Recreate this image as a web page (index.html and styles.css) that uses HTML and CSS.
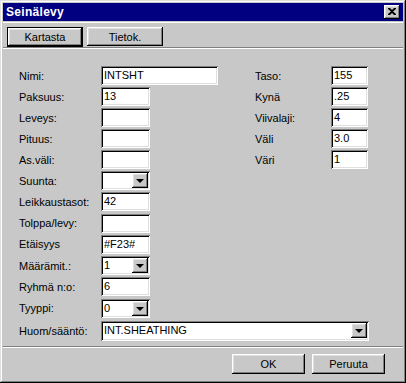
FILE: index.html
```html
<!DOCTYPE html>
<html lang="fi">
<head>
    <meta charset="UTF-8">
    <title>Seinälevy</title>
    <link rel="stylesheet" href="styles.css">
</head>
<body>
    <div class="window">
        <div class="titlebar">
            <span class="title">Seinälevy</span>
            <button class="close raised">
                <svg width="8" height="7" viewBox="0 0 8 7"><path d="M0 0h2l2 2 2-2h2v1L5 3.5 8 6v1H6L4 5 2 7H0V6l3-2.5L0 1z" fill="#000"/></svg>
            </button>
        </div>

        <div class="tabs">
            <button class="btn default">Kartasta</button>
            <button class="btn raised">Tietok.</button>
        </div>

        <div class="form">
            <div class="cols">
                <div class="col left">
                    <div class="row"><label>Nimi:</label><div class="field wide">INTSHT</div></div>
                    <div class="row"><label>Paksuus:</label><div class="field">13</div></div>
                    <div class="row"><label>Leveys:</label><div class="field"></div></div>
                    <div class="row"><label>Pituus:</label><div class="field"></div></div>
                    <div class="row"><label>As.väli:</label><div class="field"></div></div>
                    <div class="row"><label>Suunta:</label><div class="field combo"><span></span><i class="arrow raised"></i></div></div>
                    <div class="row"><label>Leikkaustasot:</label><div class="field">42</div></div>
                    <div class="row"><label>Tolppa/levy:</label><div class="field"></div></div>
                    <div class="row"><label>Etäisyys</label><div class="field">#F23#</div></div>
                    <div class="row"><label>Määrämit.:</label><div class="field combo"><span>1</span><i class="arrow raised"></i></div></div>
                    <div class="row"><label>Ryhmä n:o:</label><div class="field">6</div></div>
                    <div class="row"><label>Tyyppi:</label><div class="field combo"><span>0</span><i class="arrow raised"></i></div></div>
                </div>
                <div class="col right">
                    <div class="row"><label>Taso:</label><div class="field short">155</div></div>
                    <div class="row"><label>Kynä</label><div class="field short">.25</div></div>
                    <div class="row"><label>Viivalaji:</label><div class="field short">4</div></div>
                    <div class="row"><label>Väli</label><div class="field short">3.0</div></div>
                    <div class="row"><label>Väri</label><div class="field short">1</div></div>
                </div>
            </div>
            <div class="row last"><label>Huom/sääntö:</label><div class="field combo long"><span>INT.SHEATHING</span><i class="arrow raised"></i></div></div>
        </div>

        <div class="footer">
            <button class="btn raised">OK</button>
            <button class="btn raised">Peruuta</button>
        </div>
    </div>
</body>
</html>
```

FILE: styles.css
```css
* {
    box-sizing: border-box;
    margin: 0;
    padding: 0;
}

body {
    font-family: "Liberation Sans", Arial, sans-serif;
    font-size: 11px;
    color: #000;
    background-color: #c8c8c8;
}

.raised {
    box-shadow: inset -1px -1px #000, inset 1px 1px #fff, inset -2px -2px #808080, inset 2px 2px #dfdfdf;
}

.window {
    width: 406px;
    height: 383px;
    padding: 3px;
    background-color: #c8c8c8;
    box-shadow: inset -1px -1px #000, inset 1px 1px #dfdfdf, inset -2px -2px #808080, inset 2px 2px #fff;
    display: flex;
    flex-direction: column;
}

.titlebar {
    height: 18px;
    background-color: #000080;
    color: white;
    display: flex;
    align-items: center;
    justify-content: space-between;
    padding: 0 3px 0 3px;
}

.title {
    font-weight: bold;
    font-size: 12px;
    letter-spacing: 0.3px;
}

.close {
    width: 16px;
    height: 14px;
    border: none;
    background-color: #c8c8c8;
    display: flex;
    align-items: center;
    justify-content: center;
    padding-bottom: 1px;
}

.tabs {
    display: flex;
    gap: 4px;
    padding: 4px 0 0 4px;
    height: 26px;
    border-top: 1px solid #fff;
    border-bottom: 1px solid #808080;
    box-shadow: 0 1px #fff;
    margin-top: 1px;
}

.btn {
    font-family: inherit;
    font-size: 11px;
    background-color: #c8c8c8;
    border: none;
    width: 76px;
    height: 19px;
}

.btn.default {
    height: 20px;
    box-shadow: inset 0 0 0 1px #000, inset -2px -2px #000, inset 2px 2px #fff, inset -3px -3px #808080, inset 3px 3px #dfdfdf;
}

.form {
    padding: 17px 0 0 16px;
    flex: 1;
    border-bottom: 1px solid #808080;
}

.cols {
    display: flex;
}

.col.left {
    width: 236px;
}

.row {
    height: 21px;
    display: flex;
    align-items: center;
}

.row:nth-child(n+7) {
    margin-top: 0.3px;
}

.row.last {
    margin-top: 2px;
}

.row label {
    width: 82px;
}

.col.right label {
    width: 76px;
}

.field {
    width: 49px;
    height: 19px;
    background-color: white;
    padding: 3px 0 0 3px;
    white-space: nowrap;
    box-shadow: inset 1px 1px #808080, inset -1px -1px #fff, inset 2px 2px #000, inset -2px -2px #dfdfdf;
}

.field.wide {
    width: 117px;
}

.field.short {
    width: 37px;
}

.field.long {
    width: 268px;
    height: 20px;
}

.combo {
    display: flex;
    justify-content: space-between;
    padding: 2px 2px 2px 3px;
}

.combo span {
    padding-top: 1px;
}

.arrow {
    width: 16px;
    height: 15px;
    background-color: #c8c8c8;
    position: relative;
}

.arrow::after {
    content: "";
    position: absolute;
    left: 4px;
    top: 6px;
    border-left: 4px solid transparent;
    border-right: 4px solid transparent;
    border-top: 4px solid #000;
}

.footer {
    height: 33px;
    border-top: 1px solid #fff;
    display: flex;
    justify-content: flex-end;
    gap: 7px;
    padding: 6px 18px 0 0;
}

.footer .btn {
    width: 73px;
    height: 20px;
}
```
